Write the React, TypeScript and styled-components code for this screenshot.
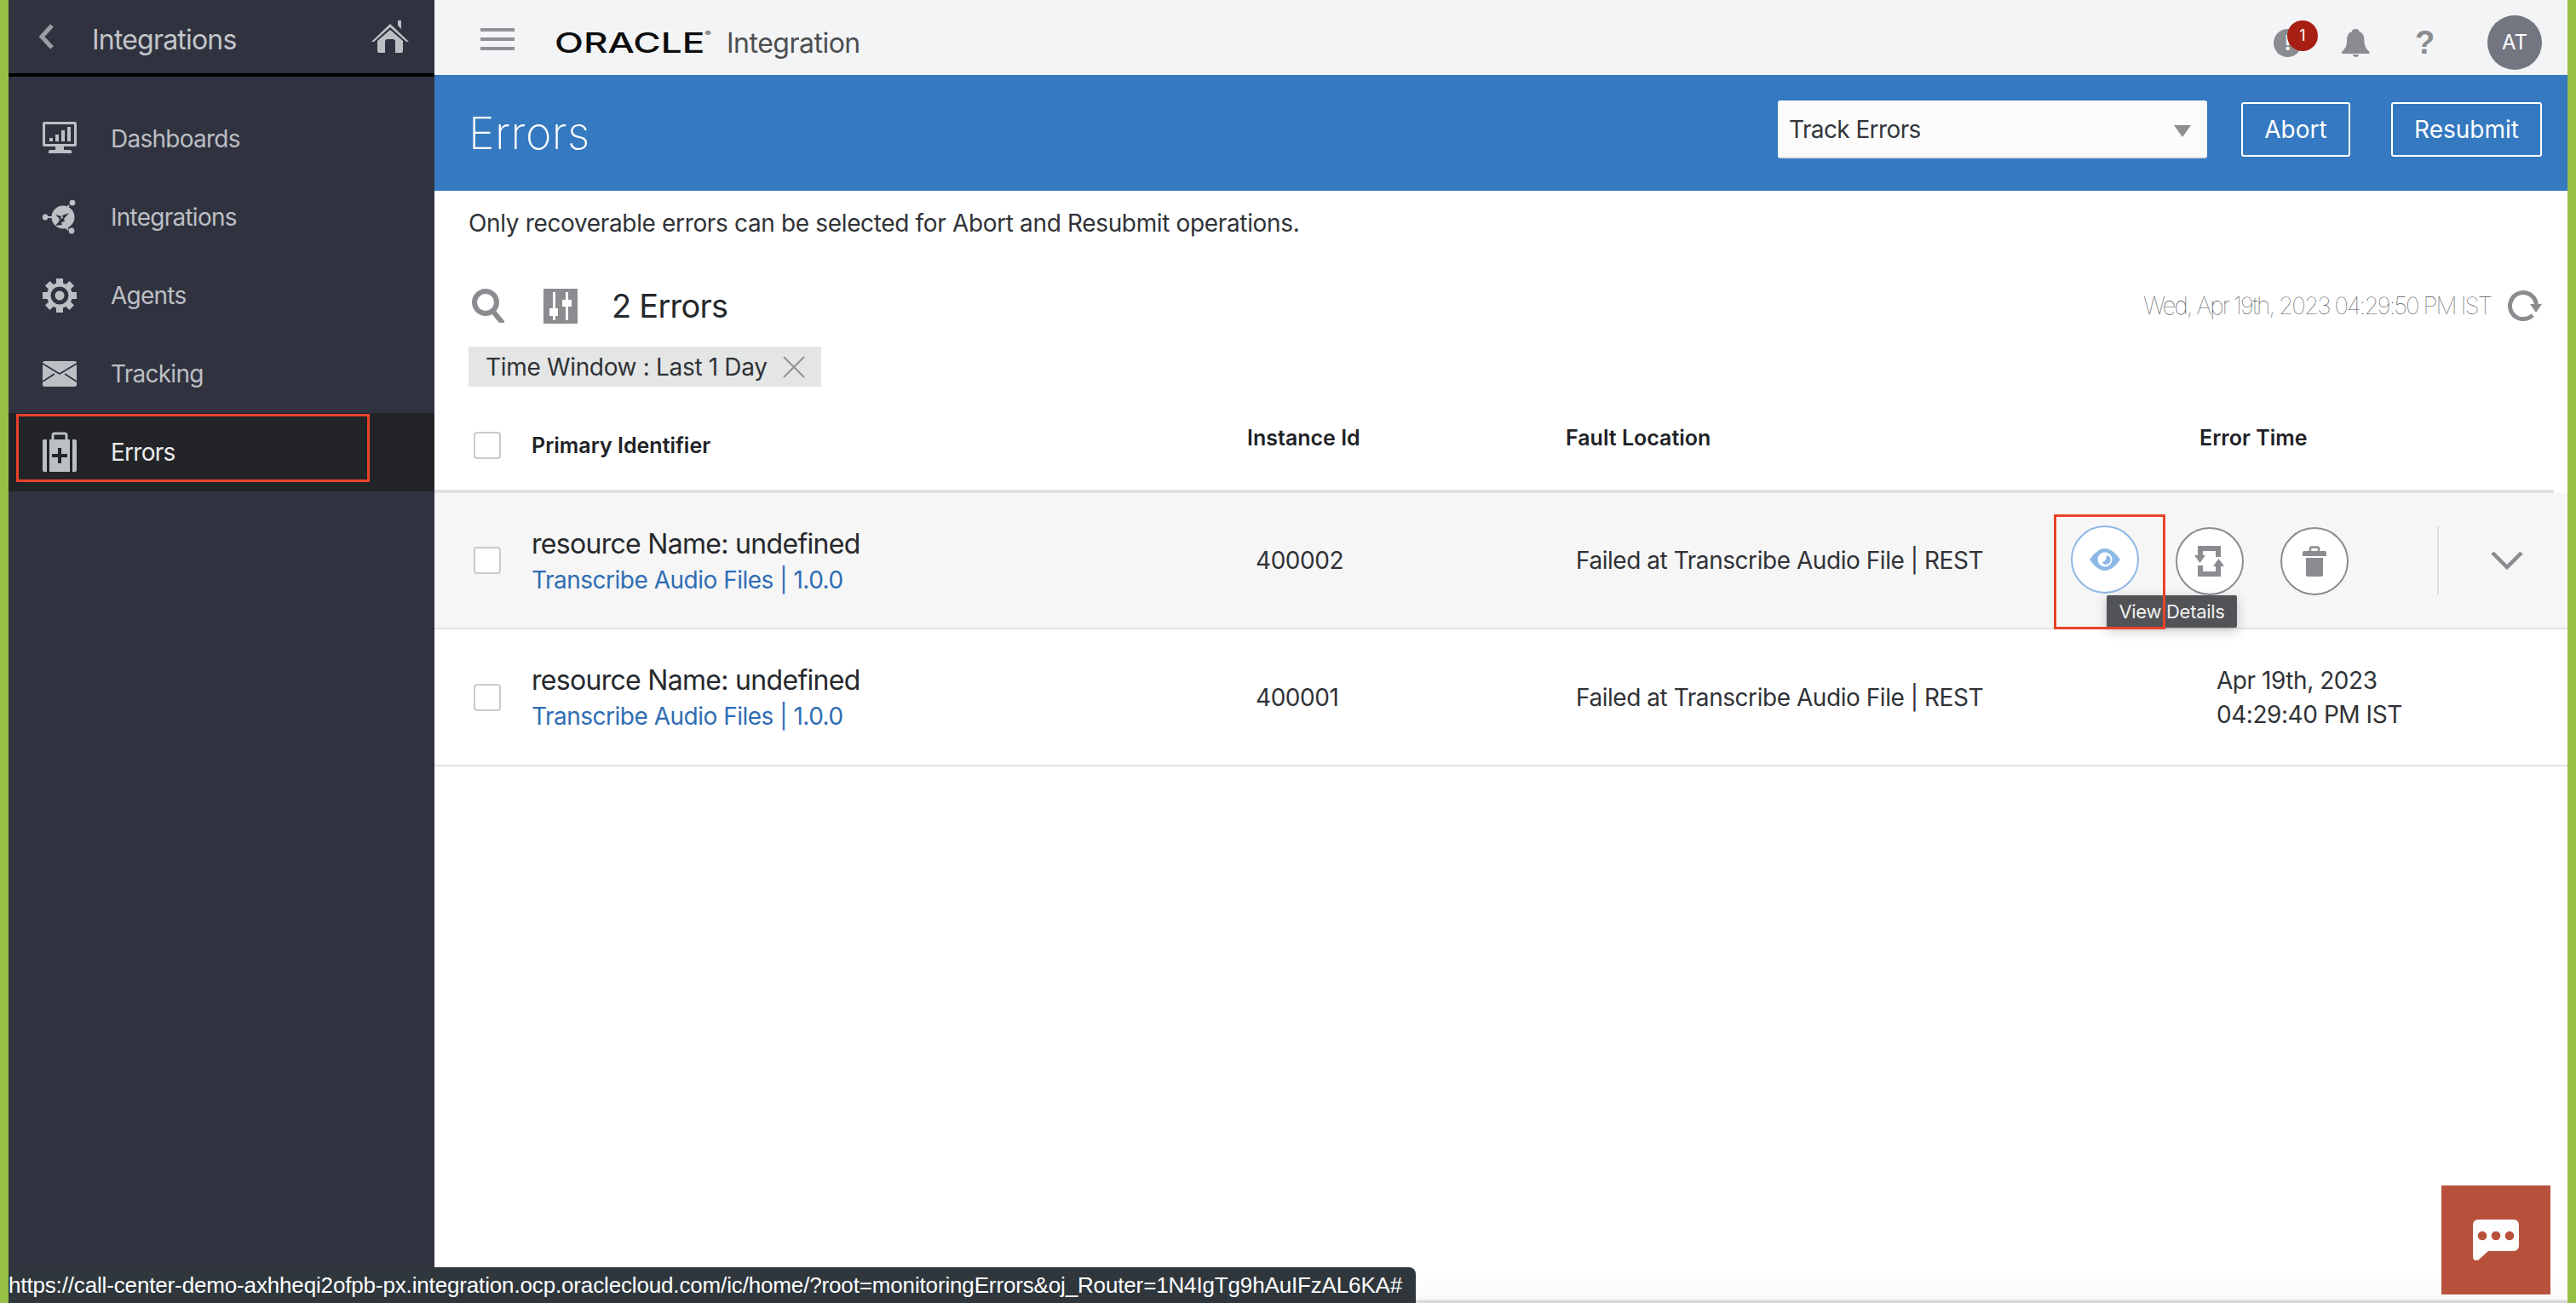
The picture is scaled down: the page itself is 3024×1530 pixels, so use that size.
import React from 'react';
import styled, { createGlobalStyle } from 'styled-components';

const GlobalStyle = createGlobalStyle`
    html, body {
        margin: 0;
        padding: 0;
        background: #fff;
        font-family: Inter, "Liberation Sans", sans-serif;
    }
    * {
        box-sizing: border-box;
    }
`;

const ICON = '#bcbfc4';
const GREY = '#8a8c90';

const DashboardIcon = () => (
    <svg width="40" height="40" viewBox="0 0 40 40">
        <path fillRule="evenodd" fill={ICON} d="M2 0h36a2 2 0 0 1 2 2v25a2 2 0 0 1-2 2H2a2 2 0 0 1-2-2V2a2 2 0 0 1 2-2zM3 3v23h34V3z" />
        <path fill={ICON} d="M8 19h4v4H8zM15 15h4v8h-4zM22 10h4v13h-4zM29 6h4v17h-4zM15 29h10v4h7a2 2 0 0 1 2 2v2H7v-2a2 2 0 0 1 2-2h6z" />
    </svg>
);

const IntegrationIcon = () => (
    <svg width="40" height="40" viewBox="0 0 40 40">
        <g stroke={ICON} strokeWidth="2" fill={ICON}>
            <path d="M3 20h8M31 6l-4 6M30 35l-5-6" />
            <circle cx="3" cy="20" r="2.4" />
            <circle cx="35" cy="3" r="2.4" />
            <circle cx="34" cy="36" r="2.4" />
        </g>
        <circle cx="24" cy="20" r="13.5" fill={ICON} />
        <path fill="#30333f" d="M15 17l7 2-1 3 3-1-1-3 8-3-6 7 1 3-4 1 1 3-8 1 5-6-1-3z" />
    </svg>
);

const GearIcon = () => (
    <svg width="40" height="40" viewBox="0 0 40 40">
        <path fillRule="evenodd" fill={ICON} d="M16 0h8v5.500l3.400 1.400 4-3.900 5.600 5.600-3.900 4 1.400 3.400H40v8h-5.500l-1.400 3.400 3.900 4-5.600 5.600-4-3.900-3.400 1.400V40h-8v-5.500l-3.400-1.400-4 3.900L3 31.400l3.900-4L5.500 24H0v-8h5.500l1.400-3.400-3.900-4L8.600 3l4 3.900L16 5.500zM20 9.500a10.500 10.500 0 1 0 0 21 10.500 10.500 0 0 0 0-21z" />
        <circle cx="20" cy="20" r="5.500" fill={ICON} />
    </svg>
);

const MailIcon = () => (
    <svg width="40" height="30" viewBox="0 0 40 30">
        <rect width="40" height="30" rx="2.500" fill={ICON} />
        <path d="M0 3l20 12L40 3M0 24l14-9M40 24l-14-9" stroke="#30333f" strokeWidth="1.800" fill="none" />
    </svg>
);

const CaseIcon = () => (
    <svg width="40" height="48" viewBox="0 0 40 48">
        <path d="M12 9V4a2 2 0 0 1 2-2h12a2 2 0 0 1 2 2v5" stroke={ICON} strokeWidth="3" fill="none" />
        <path fill={ICON} d="M2 9h3v38H2a2 2 0 0 1-2-2V11a2 2 0 0 1 2-2zM8 9h24v38H8zM35 9h3a2 2 0 0 1 2 2v34a2 2 0 0 1-2 2h-3z" />
        <path fill="#232427" d="M18 19h4v7h7v4h-7v7h-4v-7h-7v-4h7z" />
    </svg>
);

const HomeIcon = () => (
    <svg width="44" height="38" viewBox="0 0 44 38">
        <path fill={ICON} d="M31 0h4v10l-4-4zM22 4l22 21h-3L22 8 3 25H0z" />
        <path fill={ICON} d="M22 11l15 13v12a2 2 0 0 1-2 2h-7V25a3 3 0 0 0-3-3h-6a3 3 0 0 0-3 3v13H9a2 2 0 0 1-2-2V24z" />
    </svg>
);

const SearchIcon = () => (
    <svg width="40" height="40" viewBox="0 0 40 40">
        <circle cx="17" cy="16" r="13" fill="none" stroke={GREY} strokeWidth="6" />
        <path d="M26 27l10 12" stroke={GREY} strokeWidth="6" strokeLinecap="round" />
    </svg>
);

const SlidersIcon = () => (
    <svg width="40" height="41" viewBox="0 0 40 41">
        <rect width="40" height="41" fill={GREY} />
        <path fill="#fff" d="M11 4h3v19h3v9h-3v5h-3v-5H7v-9h4zM26 4h3v9h4v8h-4v16h-3V21h-4v-8h4z" />
    </svg>
);

const RefreshIcon = () => (
    <svg width="40" height="38" viewBox="0 0 40 38">
        <path d="M33.500 19A15.500 15.500 0 1 0 29 30" fill="none" stroke={GREY} strokeWidth="5" />
        <path fill={GREY} d="M26 17h14l-7 10z" />
    </svg>
);

const EyeIcon = () => (
    <svg width="36" height="26" viewBox="0 0 36 26">
        <path fillRule="evenodd" fill="#8db8e6" d="M18 0C25 0 31 6 36 13 31 20 25 26 18 26 11 26 5 20 0 13 5 6 11 0 18 0zM18 4.500a8.500 8.500 0 1 0 0 17 8.500 8.500 0 0 0 0-17z" />
        <path fill="#8db8e6" d="M20 8a5.500 5.500 0 1 1-5.500 8.500C17.500 16 20 12.500 20 8z" />
    </svg>
);

const RetryIcon = () => (
    <svg width="36" height="36" viewBox="0 0 36 36">
        <path fill={GREY} d="M4 0H31V13H25V6H10V11H13L6.500 20L0 11H4Z" />
        <path fill={GREY} d="M4 23H10V30H25V24H22L28.500 15L35 24H31V36H4Z" />
    </svg>
);

const TrashIcon = () => (
    <svg width="28" height="36" viewBox="0 0 28 36">
        <path d="M9 6V3a1.500 1.500 0 0 1 1.500-1.500h7A1.500 1.500 0 0 1 19 3v3" fill="none" stroke={GREY} strokeWidth="2.500" />
        <path fill={GREY} d="M2 6h24a2 2 0 0 1 2 2v4H0V8a2 2 0 0 1 2-2zM4 14h20v20a2 2 0 0 1-2 2H6a2 2 0 0 1-2-2z" />
    </svg>
);

const ChevronDown = () => (
    <svg width="38" height="24" viewBox="0 0 38 24">
        <path d="M2 3l17 17L36 3" fill="none" stroke={GREY} strokeWidth="4.500" />
    </svg>
);

const ChatIcon = () => (
    <svg width="54" height="48" viewBox="0 0 54 48">
        <path fill="#fff" d="M6 0h42a6 6 0 0 1 6 6v25a6 6 0 0 1-6 6H18L7 47c-3 2-7 1-7-3V6a6 6 0 0 1 6-6z" />
        <circle cx="11" cy="19" r="5.300" fill="#b8513c" />
        <circle cx="27" cy="19" r="5.300" fill="#b8513c" />
        <circle cx="43" cy="19" r="5.300" fill="#b8513c" />
    </svg>
);

const navItems = [
    { label: 'Dashboards', icon: <DashboardIcon /> },
    { label: 'Integrations', icon: <IntegrationIcon /> },
    { label: 'Agents', icon: <GearIcon /> },
    { label: 'Tracking', icon: <MailIcon /> },
    { label: 'Errors', icon: <CaseIcon />, active: true },
];

const App: React.FC = () => {
    return (
        <Page>
            <GlobalStyle />
            <Sidebar>
                <SideHeader>
                    <BackArrow viewBox="0 0 20 30" width="20" height="30">
                        <path d="M17 2L5 15l12 13" fill="none" stroke="#9b9ea3" strokeWidth="5" />
                    </BackArrow>
                    <SideTitle>Integrations</SideTitle>
                    <HomeIcon />
                </SideHeader>
                <Nav>
                    {navItems.map(item => (
                        <NavItem key={item.label} $active={item.active}>
                            <NavIcon>{item.icon}</NavIcon>
                            <NavLabel $active={item.active}>{item.label}</NavLabel>
                            {item.active && <Highlight />}
                        </NavItem>
                    ))}
                </Nav>
            </Sidebar>
            <Main>
                <TopBar>
                    <Burger>
                        <span />
                        <span />
                        <span />
                    </Burger>
                    <OracleLogo>ORACLE<sup>®</sup></OracleLogo>
                    <ProductName>Integration</ProductName>
                    <TopIcons>
                        <AlertIcon>
                            !
                            <Badge>1</Badge>
                        </AlertIcon>
                        <svg width="33" height="33" viewBox="0 0 33 33">
                            <path fill={GREY} d="M16.500 0c3 0 4 2 4 3 5 2 6 6 6 11 0 6 2 9 6 13v2H0v-2c4-4 6-7 6-13 0-5 1-9 6-11 0-1 1-3 4.500-3zM13 30h7c0 2-1.500 3-3.500 3S13 32 13 30z" />
                        </svg>
                        <Help>?</Help>
                        <Avatar>AT</Avatar>
                    </TopIcons>
                </TopBar>
                <TitleBar>
                    <PageTitle>Errors</PageTitle>
                    <TitleActions>
                        <FakeSelect>
                            Track Errors
                            <SelectArrow />
                        </FakeSelect>
                        <OutlineButton $width={128}>Abort</OutlineButton>
                        <OutlineButton $width={177}>Resubmit</OutlineButton>
                    </TitleActions>
                </TitleBar>
                <Content>
                    <Notice>Only recoverable errors can be selected for Abort and Resubmit operations.</Notice>
                    <FilterRow>
                        <SearchSlot><SearchIcon /></SearchSlot>
                        <SlidersIcon />
                        <ErrorCount>2 Errors</ErrorCount>
                        <Timestamp>Wed, Apr 19th, 2023 04:29:50 PM IST</Timestamp>
                        <RefreshIcon />
                    </FilterRow>
                    <Chip>
                        Time Window : Last 1 Day
                        <svg width="26" height="26" viewBox="0 0 26 26">
                            <path d="M1 1l24 24M25 1L1 25" stroke="#8e9093" strokeWidth="1.800" />
                        </svg>
                    </Chip>
                    <HeaderRow>
                        <HeaderCheck />
                        <HeadCell $low>Primary Identifier</HeadCell>
                        <HeadCell>Instance Id</HeadCell>
                        <HeadCell>Fault Location</HeadCell>
                        <HeadCell>Error Time</HeadCell>
                    </HeaderRow>
                    <Row $hovered>
                        <CheckBox />
                        <NameCell>
                            <ResourceName>resource Name: undefined</ResourceName>
                            <FlowLink>Transcribe Audio Files | 1.0.0</FlowLink>
                        </NameCell>
                        <Cell>400002</Cell>
                        <Cell>Failed at Transcribe Audio File | REST</Cell>
                        <Actions>
                            <CircleButton $active><EyeIcon /></CircleButton>
                            <CircleButton><RetryIcon /></CircleButton>
                            <CircleButton><TrashIcon /></CircleButton>
                            <Divider />
                            <ChevronDown />
                            <Tooltip>View Details</Tooltip>
                            <RedBox />
                        </Actions>
                    </Row>
                    <Row>
                        <CheckBox />
                        <NameCell>
                            <ResourceName>resource Name: undefined</ResourceName>
                            <FlowLink>Transcribe Audio Files | 1.0.0</FlowLink>
                        </NameCell>
                        <Cell>400001</Cell>
                        <Cell>Failed at Transcribe Audio File | REST</Cell>
                        <DateCell>Apr 19th, 2023<br />04:29:40 PM IST</DateCell>
                    </Row>
                </Content>
                <ChatButton><ChatIcon /></ChatButton>
            </Main>
            <StatusBar>https://call-center-demo-axhheqi2ofpb-px.integration.ocp.oraclecloud.com/ic/home/?root=monitoringErrors&amp;oj_Router=1N4IgTg9hAuIFzAL6KA#</StatusBar>
        </Page>
    );
};

export default App;

const Page = styled.div`
    position: relative;
    display: flex;
    width: 3024px;
    height: 1530px;
    overflow: hidden;
    border-left: 10px solid #98bf45;
    border-right: 10px solid #98bf45;
    background: #fff;
`;

const Sidebar = styled.aside`
    width: 500px;
    flex-shrink: 0;
    background: #30333f;
`;

const SideHeader = styled.div`
    display: flex;
    align-items: center;
    height: 90px;
    padding: 0 30px 0 34px;
    border-bottom: 4px solid #000;
`;

const BackArrow = styled.svg`
    flex-shrink: 0;
`;

const SideTitle = styled.div`
    flex: 1;
    margin: 6px 0 0 44px;
    font-size: 32px;
    letter-spacing: -0.8px;
    color: #c3c5c9;
`;

const Nav = styled.nav`
    display: flex;
    flex-direction: column;
    padding-top: 27px;
`;

const NavItem = styled.div<{ $active?: boolean }>`
    position: relative;
    display: flex;
    align-items: center;
    height: 92px;
    padding-left: 40px;
    background: ${props => props.$active ? '#232427' : 'transparent'};
`;

const NavIcon = styled.div`
    display: flex;
    justify-content: center;
    width: 40px;
`;

const NavLabel = styled.div<{ $active?: boolean }>`
    margin-left: 40px;
    font-size: 28px;
    letter-spacing: -0.75px;
    color: ${props => props.$active ? '#eceded' : '#bdbfc4'};
`;

const Highlight = styled.div`
    position: absolute;
    left: 9px;
    top: 1px;
    width: 415px;
    height: 80px;
    border: 3px solid #e8432a;
`;

const Main = styled.main`
    position: relative;
    flex: 1;
    display: flex;
    flex-direction: column;
    min-width: 0;
    background: linear-gradient(to bottom, #fff 1490px, #f9f9f9 1526px, #d9d9d9 1527px);
`;

const TopBar = styled.header`
    display: flex;
    align-items: center;
    height: 88px;
    padding: 12px 30px 0 54px;
    background: #f3f4f6;
`;

const Burger = styled.div`
    display: flex;
    flex-direction: column;
    gap: 7px;
    width: 40px;
    margin-top: -8px;

    span {
        height: 4px;
        background: #909195;
    }
`;

const OracleLogo = styled.div`
    width: 187px;
    margin-left: 47px;
    font-size: 33px;
    font-weight: 500;
    color: #0d0d0d;
    line-height: 1;
    transform: scaleX(1.34);
    transform-origin: left center;
    white-space: nowrap;

    sup {
        font-size: 8px;
        vertical-align: 20px;
    }
`;

const ProductName = styled.div`
    margin-left: 15px;
    font-size: 32px;
    letter-spacing: -0.5px;
    color: #4c4e50;
`;

const TopIcons = styled.div`
    display: flex;
    align-items: center;
    margin-left: auto;
`;

const AlertIcon = styled.div`
    position: relative;
    width: 33px;
    height: 33px;
    border-radius: 50%;
    background: ${GREY};
    color: #f3f4f6;
    font-size: 24px;
    font-weight: 700;
    line-height: 33px;
    text-align: center;
    margin-right: 47px;
`;

const Badge = styled.div`
    position: absolute;
    left: 16px;
    top: -10px;
    width: 36px;
    height: 36px;
    border-radius: 50%;
    background: #a81f14;
    color: #fff;
    font-size: 18px;
    font-weight: 400;
    line-height: 36px;
`;

const Help = styled.div`
    width: 20px;
    margin-left: 53px;
    font-family: "Liberation Sans", sans-serif;
    font-size: 38px;
    font-weight: 700;
    color: ${GREY};
    line-height: 1;
    text-align: center;
`;

const Avatar = styled.div`
    width: 64px;
    height: 64px;
    margin-left: 65px;
    border-radius: 50%;
    background: #737680;
    color: #fff;
    font-size: 24px;
    line-height: 64px;
    text-align: center;
`;

const TitleBar = styled.div`
    display: flex;
    align-items: center;
    justify-content: space-between;
    height: 136px;
    padding: 0 30px 0 40px;
    background: #3579c0;
`;

const PageTitle = styled.h1`
    margin: 0;
    font-size: 52px;
    font-weight: 200;
    letter-spacing: 0.4px;
    color: #fff;
`;

const TitleActions = styled.div`
    display: flex;
    align-items: center;
    margin-top: -8px;
`;

const FakeSelect = styled.div`
    position: relative;
    width: 504px;
    height: 68px;
    padding-left: 13px;
    border-bottom: 2px solid #dfe1e6;
    border-radius: 3px;
    background: #fcfcfc;
    color: #33353a;
    font-size: 28px;
    letter-spacing: -0.6px;
    line-height: 68px;
`;

const SelectArrow = styled.div`
    position: absolute;
    right: 19px;
    top: 29px;
    border-left: 10px solid transparent;
    border-right: 10px solid transparent;
    border-top: 14px solid #8d8f91;
`;

const OutlineButton = styled.div<{ $width: number }>`
    width: ${props => props.$width}px;
    height: 64px;
    margin-left: ${props => props.$width > 150 ? 48 : 40}px;
    border: 2px solid #fff;
    border-radius: 3px;
    color: #fff;
    font-size: 28px;
    line-height: 60px;
    text-align: center;
`;

const Content = styled.div`
    display: flex;
    flex-direction: column;
`;

const Notice = styled.p`
    margin: 0;
    padding: 20px 0 0 40px;
    height: 111px;
    font-size: 28px;
    letter-spacing: -0.35px;
    line-height: 36px;
    color: #303236;
`;

const FilterRow = styled.div`
    display: flex;
    align-items: center;
    height: 48px;
    padding: 0 30px 0 43px;
`;

const SearchSlot = styled.div`
    width: 85px;
    display: flex;
`;

const ErrorCount = styled.div`
    margin-left: 40px;
    font-size: 38px;
    letter-spacing: -0.75px;
    color: #26282c;
`;

const Timestamp = styled.div`
    margin-left: auto;
    margin-right: 20px;
    font-size: 28px;
    font-weight: 100;
    letter-spacing: -1.97px;
    color: #55575b;
`;

const Chip = styled.div`
    display: flex;
    align-items: center;
    gap: 18px;
    width: 414px;
    height: 47px;
    margin: 24px 0 0 40px;
    padding-left: 20px;
    background: #e4e6e6;
    color: #303236;
    font-size: 28px;
    letter-spacing: -0.33px;
    white-space: nowrap;
`;

const HeaderRow = styled.div`
    display: grid;
    grid-template-columns: 114px 840px 374px 744px 1fr;
    align-items: center;
    width: 2488px;
    height: 125px;
    border-bottom: 4px solid #dfe0e0;
`;

const HeadCell = styled.div<{ $low?: boolean }>`
    margin-top: ${props => props.$low ? 16 : -2}px;
    font-size: 25px;
    font-weight: 600;
    color: #202226;
`;

const CheckBox = styled.div`
    width: 32px;
    height: 32px;
    margin-left: 46px;
    border: 2px solid #c9cacb;
    border-radius: 4px;
    background: #fff;
`;

const HeaderCheck = styled(CheckBox)`
    margin-top: 16px;
`;

const Row = styled.div<{ $hovered?: boolean }>`
    display: grid;
    grid-template-columns: 114px 850px 376px 581px 1fr;
    align-items: center;
    height: ${props => props.$hovered ? 160 : 161}px;
    border-bottom: 2px solid #e3e3e3;
    background: ${props => props.$hovered ? '#f6f6f6' : '#fff'};
`;

const NameCell = styled.div`
    display: flex;
    flex-direction: column;
    gap: 6px;
`;

const ResourceName = styled.div`
    font-size: 32px;
    letter-spacing: -0.7px;
    color: #26282c;
`;

const FlowLink = styled.div`
    font-size: 28px;
    letter-spacing: -0.5px;
    color: #2f6db3;
`;

const Cell = styled.div`
    font-size: 28px;
    letter-spacing: -0.45px;
    color: #303236;
`;

const DateCell = styled(Cell)`
    padding-left: 171px;
    line-height: 40px;
`;

const Actions = styled.div`
    position: relative;
    display: flex;
    align-items: center;
`;

const CircleButton = styled.div<{ $active?: boolean }>`
    position: relative;
    top: ${props => props.$active ? -1 : 1}px;
    display: flex;
    align-items: center;
    justify-content: center;
    flex-shrink: 0;
    width: 80px;
    height: 80px;
    margin-right: 43px;
    border-radius: 50%;
    border: 2px solid ${props => props.$active ? '#8db8e6' : GREY};
    background: #fff;
`;

const Divider = styled.div`
    width: 2px;
    height: 80px;
    margin: 0 61px;
    background: #dfe0e0;
`;

const RedBox = styled.div`
    position: absolute;
    left: -20px;
    top: -14px;
    width: 131px;
    height: 135px;
    border: 3px solid #e8432a;
`;

const Tooltip = styled.div`
    position: absolute;
    left: 42px;
    top: 81px;
    width: 153px;
    height: 38px;
    border-radius: 2px;
    background: #515356;
    box-shadow: 0 4px 14px rgba(0, 0, 0, 0.22);
    color: #f1f1f1;
    font-size: 22px;
    letter-spacing: -0.3px;
    line-height: 38px;
    text-align: center;
`;

const ChatButton = styled.div`
    position: absolute;
    right: 20px;
    bottom: 10px;
    display: flex;
    align-items: center;
    justify-content: center;
    width: 128px;
    height: 128px;
    background: #b8513c;
`;

const StatusBar = styled.div`
    position: absolute;
    left: 0;
    bottom: 0;
    width: 1652px;
    height: 42px;
    border-top-right-radius: 8px;
    background: #2f373d;
    color: #fff;
    font-family: "Liberation Sans", sans-serif;
    font-size: 26px;
    letter-spacing: -0.15px;
    line-height: 42px;
    white-space: nowrap;
`;
